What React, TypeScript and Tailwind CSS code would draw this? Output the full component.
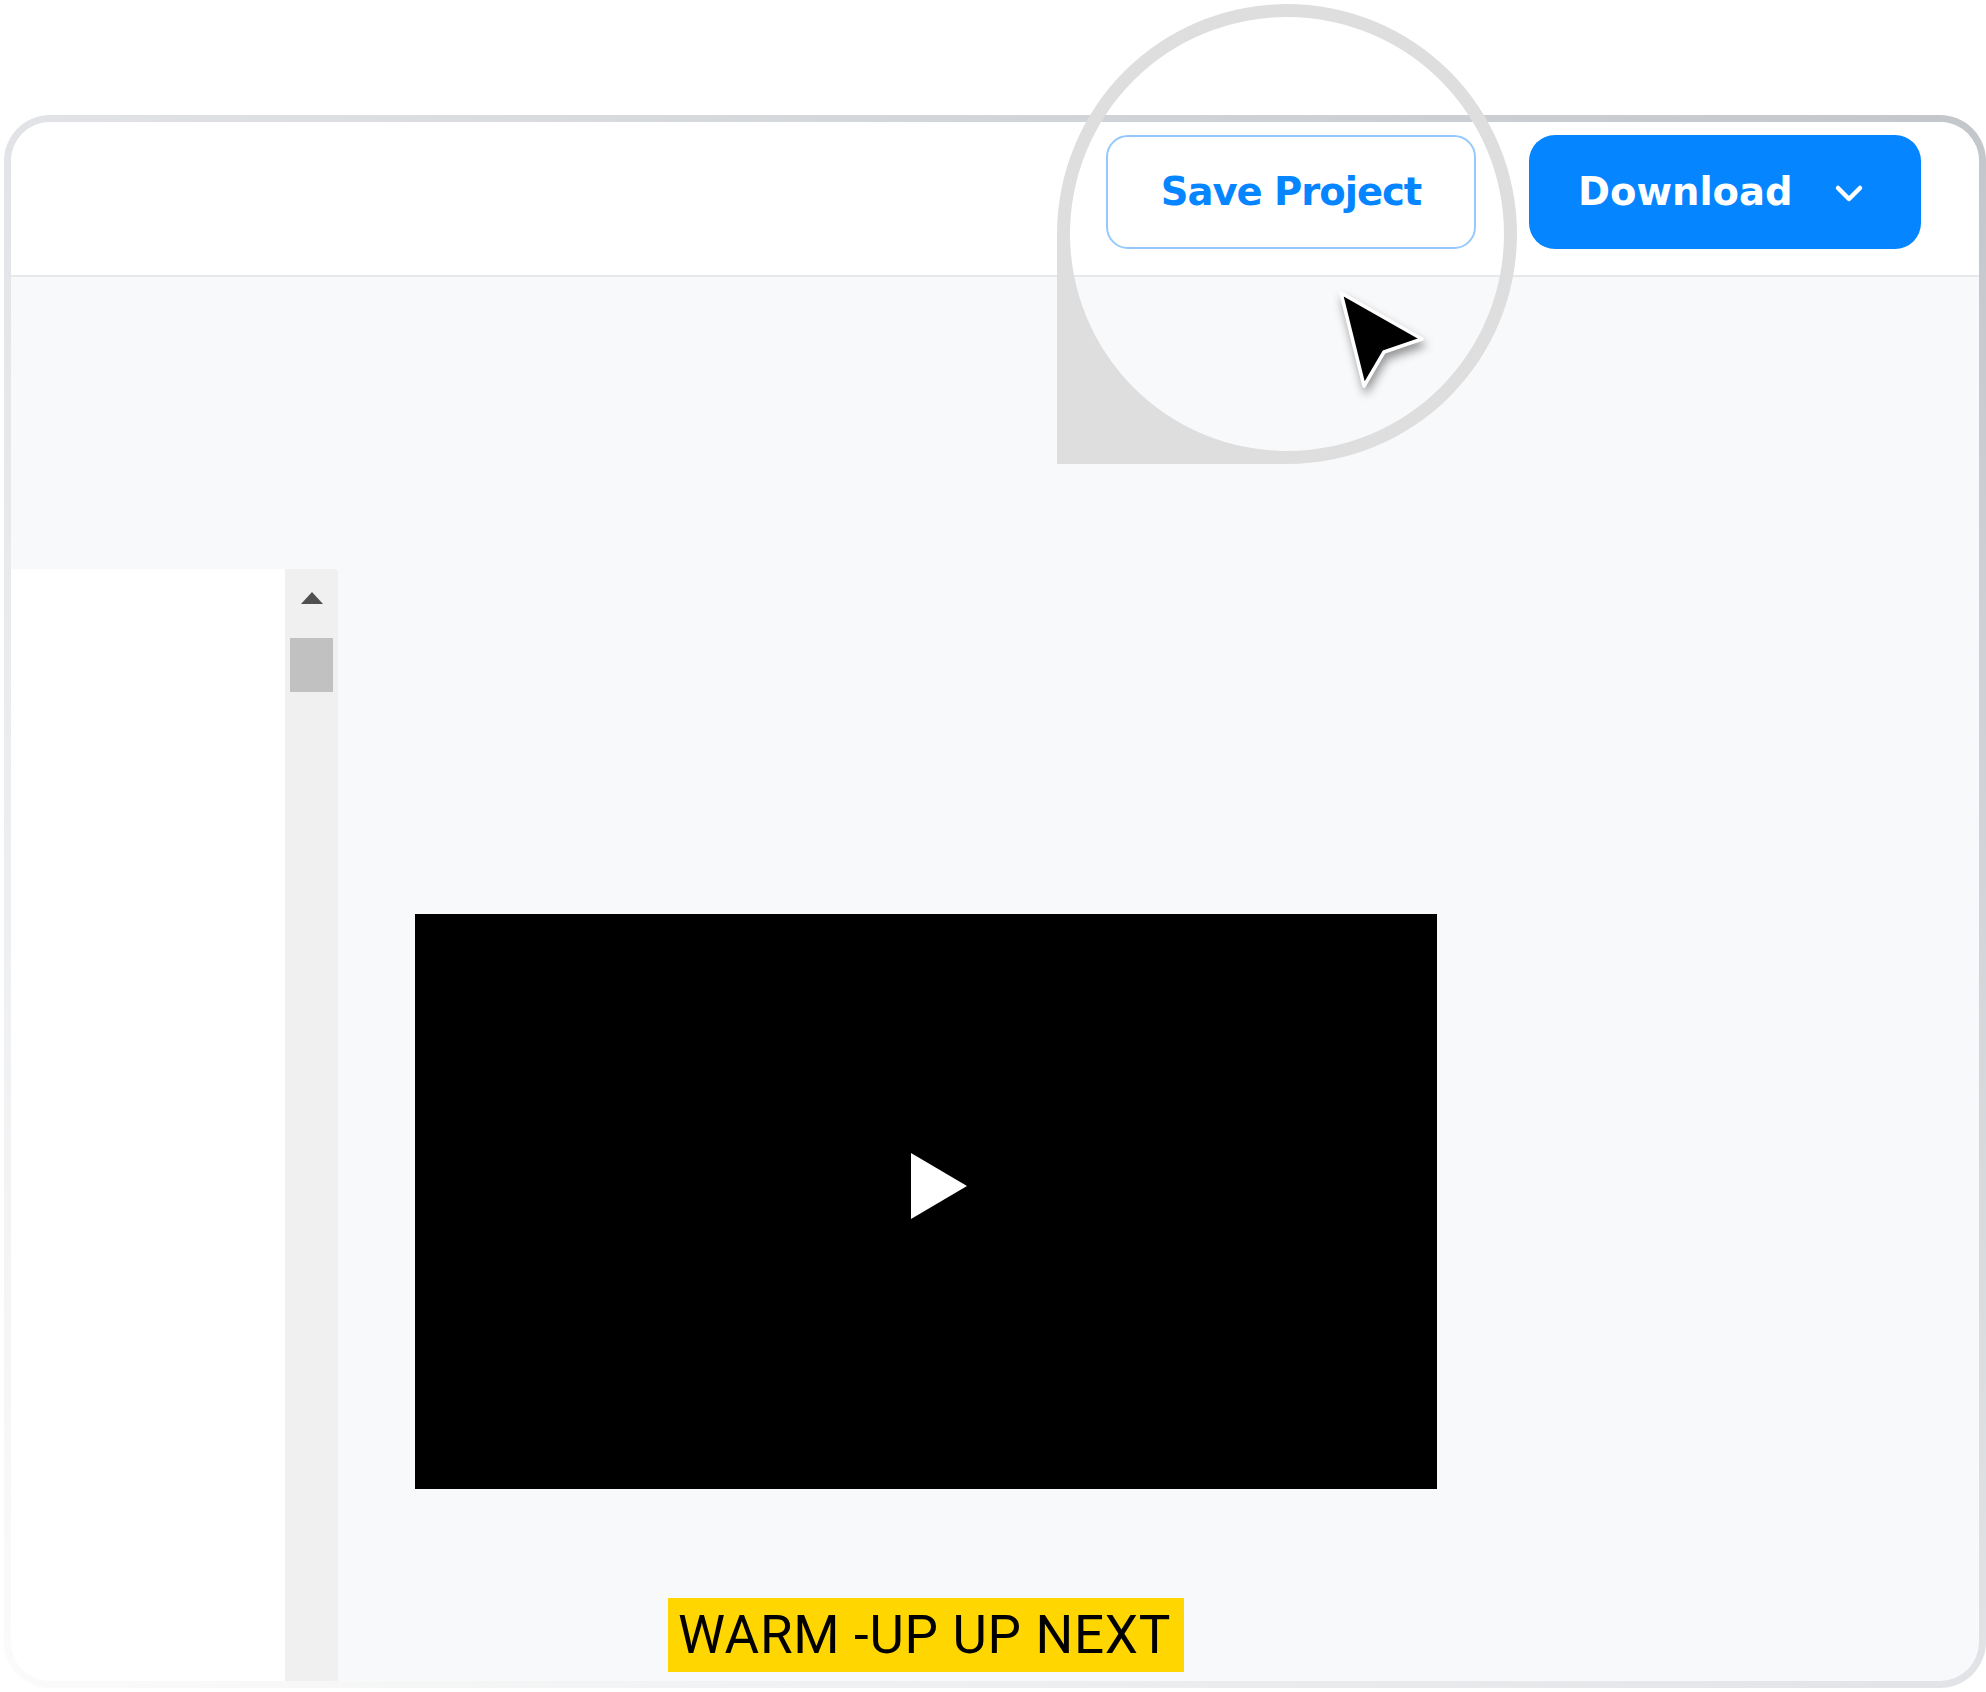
import React from "react";

function Magnifier() {
  // ring centred at (237,234) in local coords (page 1287,234), outer r 230, inner r 217
  return (
    <svg
      className="absolute left-[1050px] top-0"
      width="470"
      height="470"
      viewBox="0 0 470 470"
    >
      <path
        fillRule="evenodd"
        fill="#dedede"
        d="M7 234 A230 230 0 1 1 237 464 L7 464 Z M20 234 A217 217 0 1 0 454 234 A217 217 0 1 0 20 234 Z"
      />
    </svg>
  );
}

function Cursor() {
  return (
    <svg
      className="absolute left-[1320px] top-[280px] drop-shadow-[2px_6px_5px_rgba(0,0,0,0.4)]"
      width="130"
      height="130"
      viewBox="0 0 130 130"
    >
      <path
        d="M21 13 L102 59 L64 72 L44 106 Z"
        fill="#000"
        stroke="#fff"
        strokeWidth="3.5"
        strokeLinejoin="round"
      />
    </svg>
  );
}

export default function App() {
  return (
    <div className="relative w-[1986px] h-[1692px] overflow-hidden bg-white">
      <div className="pt-[115px] pl-[4px]">
        <div className="w-[1982px] h-[1573px] rounded-[46px] p-[7px] bg-linear-to-bl from-[#c3c7cb] via-[#e1e3e6] to-[#fbfbfb]">
          <div className="flex h-full flex-col overflow-hidden rounded-[39px] bg-[#f8f9fb]">
            {/* header */}
            <div className="flex h-[155px] shrink-0 items-start justify-end gap-[53px] border-b-2 border-[#e6e8ec] bg-white pr-[58px] pt-[13px]">
              <button className="flex h-[114px] w-[370px] items-center justify-center rounded-[22px] border-2 border-[#95c8ff] bg-white text-[38.5px] font-bold tracking-[-1px] text-[#0585ff] [font-family:'DejaVu_Sans',sans-serif]">
                Save Project
              </button>
              <button className="flex h-[114px] w-[392px] items-center gap-[41px] rounded-[26px] bg-[#0585ff] pl-[49px] text-[38.5px] font-bold text-white [font-family:'DejaVu_Sans',sans-serif]">
                <span>Download</span>
                <svg width="30" height="19" viewBox="0 0 30 19" className="mt-[2px]">
                  <polyline
                    points="4,4 15,15 26,4"
                    fill="none"
                    stroke="#fff"
                    strokeWidth="4.5"
                    strokeLinecap="round"
                    strokeLinejoin="round"
                  />
                </svg>
              </button>
            </div>
            {/* body */}
            <div className="flex flex-1">
              <div className="flex flex-col pt-[292px]">
                <div className="flex flex-1">
                  <div className="w-[274px] bg-white" />
                  <div className="flex w-[53px] flex-col items-center rounded-tr-[4px] bg-[#f0f0f0]">
                    <svg width="24" height="14" viewBox="0 0 24 14" className="mt-[22px]">
                      <polygon points="12,1 23,13 1,13" fill="#505050" />
                    </svg>
                    <div className="mt-[33px] h-[54px] w-[43px] bg-[#c1c1c1]" />
                  </div>
                </div>
              </div>
              <div className="flex flex-col items-start pl-[77px] pt-[637px]">
                <div className="flex h-[575px] w-[1022px] items-center justify-center bg-black pb-[31px] pl-[26px]">
                  <svg width="56" height="66" viewBox="0 0 56 66">
                    <polygon points="0,0 56,33 0,66" fill="#fff" />
                  </svg>
                </div>
                <div className="ml-[253px] mt-[109px] flex h-[74px] w-[516px] items-center bg-[#ffd600] px-[10px] text-[53px] leading-[74px] tracking-[0.7px] text-black [font-family:Roboto,sans-serif]">
                  WARM -UP UP NEXT
                </div>
              </div>
            </div>
          </div>
        </div>
      </div>
      <Magnifier />
      <Cursor />
    </div>
  );
}
